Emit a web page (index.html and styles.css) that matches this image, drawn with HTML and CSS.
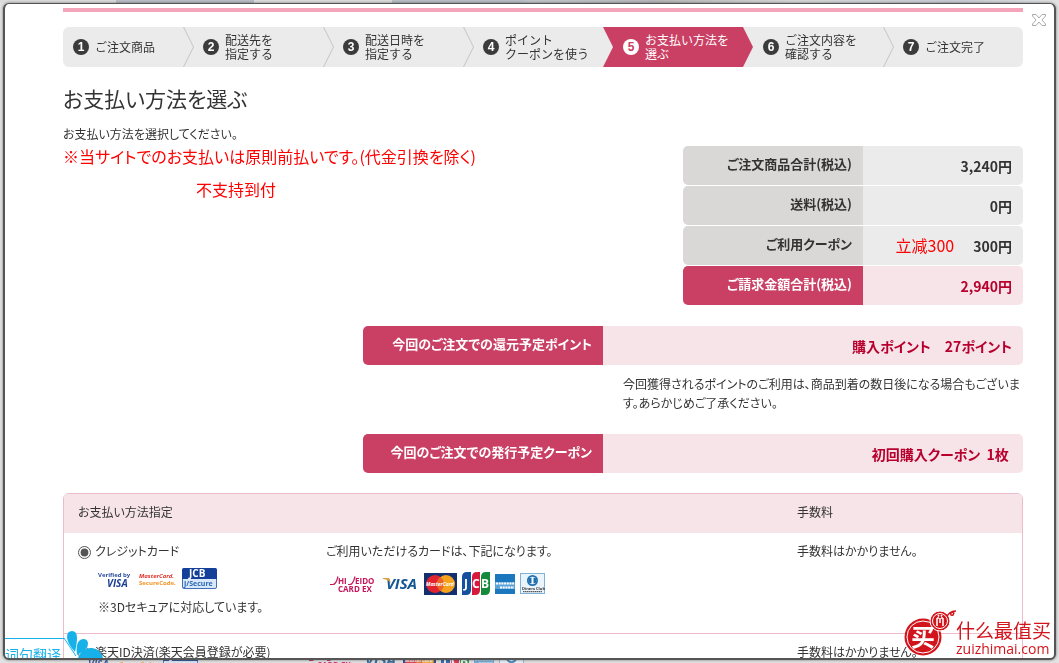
FILE: index.html
```html
<!DOCTYPE html>
<html lang="ja">
<head>
    <meta charset="UTF-8">
    <meta name="viewport" content="width=device-width, initial-scale=1.0">
    <title>お支払い方法を選ぶ</title>
    <link rel="stylesheet" href="styles.css">
</head>
<body>

    <!-- shared card logos -->
    <svg class="defs" aria-hidden="true">
        <symbol id="logo-verified" viewBox="0 0 36 20">
            <text x="0" y="8" class="t-verified">Verified by</text>
            <text x="9" y="18" class="t-visa-s">VISA</text>
        </symbol>
        <symbol id="logo-securecode" viewBox="0 0 38 20">
            <text x="0" y="9" class="t-mc-red">MasterCard.</text>
            <text x="0" y="16" class="t-mc-orange">SecureCode.</text>
        </symbol>
        <symbol id="logo-jsecure" viewBox="0 0 35 21">
            <rect x="0.5" y="0.5" width="34" height="20" rx="1.5" fill="#d9e8f8" stroke="#3f6fb5"/>
            <path d="M0 11V2q0-2 2-2h31q2 0 2 2v9z" fill="#14409a"/>
            <text x="7" y="9" class="t-jcb-s">JCB</text>
            <text x="2" y="18" class="t-jsecure">J/Secure</text>
        </symbol>
        <symbol id="logo-shiseido" viewBox="0 0 48 18">
            <path d="M0 9.500h3q3 0 5-8M18 9.500h2q3 0 5-8" fill="none" stroke="#c4145a" stroke-width="1.200"/>
            <text x="8" y="9" class="t-shiseido">HI</text>
            <text x="25" y="9" class="t-shiseido">EIDO</text>
            <text x="8" y="17" class="t-cardex">CARD EX</text>
        </symbol>
        <symbol id="logo-visa" viewBox="0 0 36 16">
            <text x="3" y="13" class="t-visa">VISA</text>
            <path d="M0 2h6l2 5q-4-4-8-4z" fill="#d9a13a"/>
        </symbol>
        <symbol id="logo-mastercard" viewBox="0 0 33 22">
            <rect width="33" height="22" fill="#132f6e"/>
            <circle cx="11" cy="11" r="9" fill="#e0232e"/>
            <circle cx="22" cy="11" r="9" fill="#f6a21c"/>
            <path d="M16.500 3.900a9 9 0 0 1 0 14.200a9 9 0 0 1 0-14.200z" fill="#ea6427"/>
            <text x="2" y="13" class="t-mc">MasterCard</text>
        </symbol>
        <symbol id="logo-jcb" viewBox="0 0 28 23">
            <path d="M0 5q0-5 5-5h4v18q0 5-5 5H0z" fill="#1550a0"/>
            <path d="M10 5q0-5 5-5h3v18q0 5-5 5h-3z" fill="#d7193d"/>
            <path d="M19 5q0-5 5-5h4v18q0 5-5 5h-4z" fill="#168a3c"/>
            <text x="2" y="16" class="t-jcb">J</text>
            <text x="10" y="16" class="t-jcb">C</text>
            <text x="19" y="16" class="t-jcb">B</text>
        </symbol>
        <symbol id="logo-amex" viewBox="0 0 20 20">
            <rect width="20" height="20" fill="#1b78bf"/>
            <rect y="8" width="20" height="7" fill="#5ca4d8"/>
            <path d="M1 9.500h18M5 13.500h14" stroke="#fff" stroke-width="2" stroke-dasharray="2 .7"/>
        </symbol>
        <symbol id="logo-diners" viewBox="0 0 25 21">
            <rect x="0.5" y="0.5" width="24" height="20" fill="#eaf4fb" stroke="#7fb2d6"/>
            <circle cx="12.500" cy="7.500" r="5.500" fill="#1b6fb0"/>
            <circle cx="12.500" cy="7.500" r="3.800" fill="#fff"/>
            <path d="M11.500 4.500a3 3 0 0 0 0 6zM13.500 4.500a3 3 0 0 1 0 6z" fill="#1b6fb0"/>
            <text x="2" y="17" class="t-diners">Diners Club</text>
            <path d="M3 18.700h19" stroke="#333" stroke-dasharray="1.500 .5"/>
        </symbol>
    </svg>

    <!-- page behind the dialog -->
    <div class="backdrop" aria-hidden="true">
        <div class="backdrop-top"></div>
        <div class="backdrop-bottom">
            <div class="logos">
                <svg width="36" height="20"><use href="#logo-verified"/></svg>
                <svg width="38" height="20"><use href="#logo-securecode"/></svg>
                <svg width="35" height="21"><use href="#logo-jsecure"/></svg>
            </div>
            <div class="logos">
                <svg width="48" height="18"><use href="#logo-shiseido"/></svg>
                <svg width="36" height="16"><use href="#logo-visa"/></svg>
                <svg width="33" height="22"><use href="#logo-mastercard"/></svg>
                <svg width="28" height="23"><use href="#logo-jcb"/></svg>
                <svg width="20" height="20"><use href="#logo-amex"/></svg>
                <svg width="25" height="21"><use href="#logo-diners"/></svg>
            </div>
        </div>
    </div>

    <div class="dialog">
        <button class="close-btn" type="button" aria-label="閉じる">
            <svg width="16" height="14" viewBox="0 0 16 14">
                <path d="M1.500 1.500h3.500l3 3.500 3-3.500h3.500v1.500L11 7l3.500 4v1.500H11L8 9l-3 3.500H1.500V11L5 7 1.500 3z" fill="#fff" stroke="#aaa"/>
            </svg>
        </button>

        <main class="content">
            <ol class="steps">
                <li><span class="num">1</span><span>ご注文商品</span></li>
                <li><svg class="sep" width="11" height="40"><path d="M.5 0l10 20-10 20"/></svg><span class="num">2</span><span>配送先を<br>指定する</span></li>
                <li><svg class="sep" width="11" height="40"><path d="M.5 0l10 20-10 20"/></svg><span class="num">3</span><span>配送日時を<br>指定する</span></li>
                <li><svg class="sep" width="11" height="40"><path d="M.5 0l10 20-10 20"/></svg><span class="num">4</span><span>ポイント<br>クーポンを使う</span></li>
                <li class="active" aria-current="step"><span class="num">5</span><span>お支払い方法を<br>選ぶ</span></li>
                <li><span class="num">6</span><span>ご注文内容を<br>確認する</span></li>
                <li><svg class="sep" width="11" height="40"><path d="M.5 0l10 20-10 20"/></svg><span class="num">7</span><span>ご注文完了</span></li>
            </ol>

            <h1>お支払い方法を選ぶ</h1>

            <div class="summary">
                <div class="intro">
                    <p>お支払い方法を選択してください。</p>
                    <p class="notice">※当サイトでのお支払いは原則前払いです。(代金引換を除く)</p>
                    <p class="memo" lang="zh-CN">不支持到付</p>
                </div>
                <table class="totals">
                    <tr><th scope="row">ご注文商品合計(税込)</th><td>3,240円</td></tr>
                    <tr><th scope="row">送料(税込)</th><td>0円</td></tr>
                    <tr><th scope="row">ご利用クーポン</th><td><span class="memo" lang="zh-CN">立减300</span>300円</td></tr>
                    <tr class="pink"><th scope="row">ご請求金額合計(税込)</th><td>2,940円</td></tr>
                </table>
            </div>

            <section class="reward">
                <table class="totals">
                    <tr class="pink"><th scope="row">今回のご注文での還元予定ポイント</th><td>購入ポイント　27ポイント</td></tr>
                </table>
                <p>今回獲得されるポイントのご利用は、商品到着の数日後になる場合もございます。あらかじめご了承ください。</p>
                <table class="totals">
                    <tr class="pink"><th scope="row">今回のご注文での発行予定クーポン</th><td>初回購入クーポン&nbsp; 1枚&nbsp;</td></tr>
                </table>
            </section>

            <table class="payment">
                <thead>
                    <tr>
                        <th scope="col" class="col-method" colspan="2">お支払い方法指定</th>
                        <th scope="col" class="col-fee">手数料</th>
                    </tr>
                </thead>
                <tbody>
                    <tr>
                        <td class="col-method">
                            <label><input type="radio" name="pay" checked>クレジットカード</label>
                            <div class="sub">
                                <div class="logos">
                                    <svg width="36" height="20" role="img" aria-label="Verified by VISA"><use href="#logo-verified"/></svg>
                                    <svg width="38" height="20" role="img" aria-label="MasterCard SecureCode"><use href="#logo-securecode"/></svg>
                                    <svg width="35" height="21" role="img" aria-label="JCB J/Secure"><use href="#logo-jsecure"/></svg>
                                </div>
                                <p>※3Dセキュアに対応しています。</p>
                            </div>
                        </td>
                        <td>
                            ご利用いただけるカードは、下記になります。
                            <div class="logos cards">
                                <svg width="48" height="18" role="img" aria-label="SHISEIDO CARD EX"><use href="#logo-shiseido"/></svg>
                                <svg width="36" height="16" role="img" aria-label="VISA"><use href="#logo-visa"/></svg>
                                <svg width="33" height="22" role="img" aria-label="MasterCard"><use href="#logo-mastercard"/></svg>
                                <svg width="28" height="23" role="img" aria-label="JCB"><use href="#logo-jcb"/></svg>
                                <svg width="20" height="20" role="img" aria-label="American Express"><use href="#logo-amex"/></svg>
                                <svg width="25" height="21" role="img" aria-label="Diners Club"><use href="#logo-diners"/></svg>
                            </div>
                        </td>
                        <td class="col-fee">手数料はかかりません。</td>
                    </tr>
                    <tr>
                        <td class="col-method" colspan="2">
                            <label><input type="radio" name="pay">楽天ID決済(楽天会員登録が必要)</label>
                        </td>
                        <td class="col-fee">手数料はかかりません。</td>
                    </tr>
                </tbody>
            </table>
        </main>

        <!-- translate widget -->
        <div class="translate" lang="zh-CN">
            <span>词句翻译</span>
            <svg width="44" height="28" viewBox="0 0 44 28" fill="#17b1ea">
                <path d="M11 22Q3 13 3 7Q3 1 8 1q5 0 5 7 0 5-2 14z"/>
                <path d="M13 25q-2-15 6-16 5 0 5 5 0 6-11 11z"/>
                <path d="M14 28q4-11 14-10 9 1 11 10z"/>
                <path d="M0 8l12 18" fill="none" stroke="#17b1ea"/>
            </svg>
        </div>

        <!-- watermark -->
        <div class="watermark" lang="zh-CN">
            <svg width="52" height="48" viewBox="0 0 52 48">
                <circle cx="19" cy="27" r="18.500" fill="#d2151c"/>
                <circle cx="19" cy="27" r="16" fill="none" stroke="#fff" stroke-width="1"/>
                <circle cx="36" cy="11" r="10" fill="#d2151c" stroke="#fff"/>
                <circle cx="36" cy="11" r="7.500" fill="none" stroke="#fff"/>
                <path d="M33 8v8M39 8v8M36 8v5M33 8h2M37 8h2M34 5l1 1.500M38 5l-1 1.500" stroke="#fff" stroke-width="1.500" fill="none"/>
                <path d="M43 6q3-4 5-4 3 0 1 3-3 1-2-2 1-2 5-2" fill="none" stroke="#d2151c" stroke-width="1.500"/>
                <text x="7" y="36" class="t-seal">买</text>
            </svg>
            <div class="watermark-text">
                <strong>什么最值买</strong>
                <span>zuizhimai.com</span>
            </div>
        </div>
    </div>

</body>
</html>
```

FILE: styles.css
```css
* {
    box-sizing: border-box;
}

body {
    margin: 0;
    padding: 3px;
    height: 100vh;
    overflow: hidden;
    position: relative;
    background: #e2e2e2;
    color: #333;
    font-family: "Noto Sans CJK JP", sans-serif;
    font-feature-settings: "palt";
    font-size: 12px;
    line-height: 18px;
}

h1, p, ol {
    margin: 0;
    padding: 0;
}

.defs {
    display: none;
}

/* page behind */
.backdrop {
    position: absolute;
    inset: 0;
    display: flex;
    flex-direction: column;
    justify-content: space-between;
}

.backdrop-top {
    height: 3px;
    background: linear-gradient(90deg, #dcdcdc 11%, #b9bfc5 11%, #b9bfc5 24%, #dedede 24%, #dedede 37%, #b9bfc5 37%, #b9bfc5 49%, #c3c7cb 50%, #b9b9bb 62%, #d9d9d9 75%, #c9ced4 90%, #e2e2e2);
}

.backdrop-bottom {
    height: 6px;
    overflow: hidden;
    display: flex;
    align-items: center;
    gap: 111px;
    padding-left: 79px;
    opacity: .8;
}

.dialog {
    position: relative;
    height: 100%;
    overflow: hidden;
    background: #fff;
    border: 2px solid #555;
    border-top-width: 1px;
    border-radius: 6px;
    box-shadow: 0 0 3px rgba(0,0,0,0.5);
}

.close-btn {
    position: absolute;
    top: 9px;
    right: 7px;
    padding: 0;
    border: none;
    background: none;
    cursor: pointer;
}

.close-btn svg {
    display: block;
}

.content {
    margin: 4px 31px 0 58px;
    border-top: 4px solid #f5a5b9;
    padding-top: 15px;
}

/* steps */
.steps {
    display: grid;
    grid-template-columns: 120fr repeat(6, 140fr);
    height: 40px;
    border-radius: 6px;
    background: #ebebeb;
    list-style: none;
    font-feature-settings: normal;
    line-height: 14px;
}

.steps li {
    position: relative;
    display: flex;
    align-items: center;
    gap: 6px;
    min-width: 0;
    padding-left: 20px;
    white-space: nowrap;
}

.steps li:first-child {
    padding-left: 10px;
}

.steps .active {
    z-index: 1;
    margin-right: -10px;
    background: #ca4064;
    color: #fff;
    clip-path: polygon(0 0, calc(100% - 10px) 0, 100% 50%, calc(100% - 10px) 100%, 0 100%, 10px 50%);
}

.sep {
    position: absolute;
    left: 0;
    top: 0;
    fill: none;
    stroke: #c4c4c4;
}

.num {
    width: 16px;
    height: 16px;
    border-radius: 50%;
    background: #3b3b3b;
    color: #fff;
    font: bold 12px/16px "Liberation Sans", sans-serif;
    text-align: center;
}

.active .num {
    background: #fff;
    color: #ca4064;
}

h1 {
    margin-top: 18px;
    font-size: 21px;
    font-weight: 400;
    line-height: 26px;
}

/* order summary */
.summary {
    display: flex;
    justify-content: space-between;
    align-items: flex-end;
}

.intro {
    align-self: flex-start;
    padding-top: 14px;
}

.notice {
    color: red;
    font-size: 16px;
    line-height: 26px;
}

.memo {
    color: red;
    font-family: "Noto Sans CJK SC", sans-serif;
    font-size: 16px;
    font-weight: 400;
}

p.memo {
    margin: 11px 0 0 133px;
}

span.memo {
    margin-right: 19px;
}

.totals {
    width: 340px;
    margin-top: 34px;
    border-collapse: separate;
    border-spacing: 0 1px;
    text-align: right;
}

.totals th, .totals td {
    height: 39px;
    padding: 0 11px;
    font-weight: 700;
}

.totals th {
    width: 180px;
    padding-bottom: 4px;
    border-radius: 5px 0 0 5px;
    background: #d9d8d6;
    font-size: 13px;
}

.totals td {
    border-radius: 0 5px 5px 0;
    background: #ebebeb;
    font-size: 14px;
}

.totals .pink th {
    background: #ca4064;
    color: #fff;
}

.totals .pink td {
    background: #f7e4e8;
    color: #b8002f;
}

.reward {
    width: 660px;
    margin-left: auto;
}

.reward .totals {
    width: 100%;
    margin-top: 19px;
}

.reward .totals th {
    width: 240px;
}

.reward p {
    margin: 8px 0 0 260px;
    padding: 0 2px 2px 0;
    line-height: 19px;
}

/* payment methods */
.payment {
    width: 100%;
    margin-top: 19px;
    border: 1px solid #ecbccb;
    border-radius: 6px;
    border-spacing: 0;
    overflow: hidden;
}

.payment th, .payment td {
    padding: 9px 14px;
    text-align: left;
    vertical-align: top;
    font-weight: 400;
}

.payment th {
    height: 39px;
    background: #f7e4e8;
}

.payment td {
    height: 100px;
}

.payment tr + tr td {
    border-top: 1px solid #ecbccb;
}

.col-method {
    width: 248px;
}

.col-fee {
    width: 239px;
}

.payment label {
    display: flex;
    align-items: center;
    gap: 4px;
}

.payment input {
    width: 13px;
    height: 13px;
    margin: 2px 0 0;
    accent-color: #555;
}

.sub {
    padding-left: 20px;
}

.sub .logos {
    margin: 8px 0 9px;
}

.logos {
    display: flex;
    align-items: center;
    gap: 5px;
}

.cards {
    margin-top: 12px;
    padding-left: 4px;
}

/* text inside the logos */
symbol text {
    font-family: "Open Sans", sans-serif;
    font-weight: 700;
}

.t-verified { font-size: 6px; fill: #2a4da0; }
.t-visa-s { font-size: 10px; font-style: italic; fill: #1a3f94; }
.t-mc-red { font-size: 6px; font-style: italic; fill: #e0322b; }
.t-mc-orange { font-size: 6px; fill: #f39323; }
.t-jcb-s { font-size: 10px; fill: #fff; }
.t-jsecure { font-size: 7px; fill: #2a66b5; }
.t-shiseido { font-size: 8px; fill: #c4145a; }
.t-cardex { font-size: 8px; fill: #c4145a; }
.t-visa { font-size: 15px; font-style: italic; fill: #125794; }
.t-mc { font-size: 5px; font-style: italic; fill: #fff; }
.t-jcb { font-size: 12px; fill: #fff; }
.t-diners { font-size: 4px; fill: #333; }

/* translate widget */
.translate {
    position: absolute;
    left: 0;
    bottom: 0;
    display: flex;
    align-items: flex-end;
    height: 28px;
    color: #17b1ea;
    font-family: "Noto Sans CJK SC", sans-serif;
    font-size: 14px;
}

.translate span {
    height: 20px;
    overflow: hidden;
    border-top: 1px solid #17b1ea;
    padding: 6px 3px 0 0;
}

/* watermark */
.watermark {
    position: absolute;
    right: 3px;
    bottom: 0;
    display: flex;
    color: #d2151c;
    font-family: "Noto Sans CJK SC", sans-serif;
}

.t-seal {
    fill: #fff;
    font-size: 24px;
    font-weight: 700;
}

.watermark-text {
    display: flex;
    flex-direction: column;
    padding-top: 10px;
}

.watermark-text strong {
    font-size: 19px;
    font-weight: 400;
    line-height: 20px;
}

.watermark-text span {
    font-family: "Open Sans", sans-serif;
    font-size: 14px;
    line-height: 17px;
}
```
